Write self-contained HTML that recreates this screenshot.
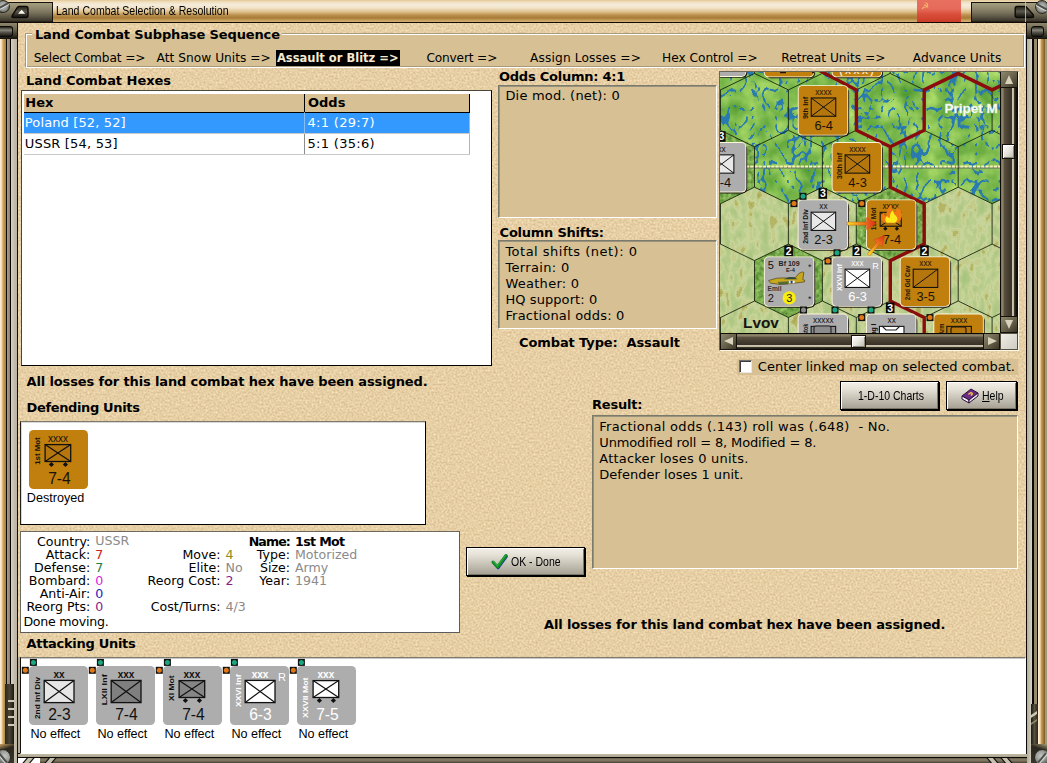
<!DOCTYPE html>
<html lang="en"><head><meta charset="utf-8"><title>Land Combat Selection &amp; Resolution</title>
<style>
html,body{margin:0;padding:0}
body{width:1047px;height:763px;position:relative;overflow:hidden;background:#e7cfa5;font-family:"DejaVu Sans","Liberation Sans",sans-serif;font-size:13px;color:#000}
.a{position:absolute;box-sizing:border-box}
.t{position:absolute;white-space:pre;display:block}
.f-dj{font-family:"DejaVu Sans","Liberation Sans",sans-serif}
.f-ls{font-family:"Liberation Sans","DejaVu Sans",sans-serif}
#tex{position:absolute;left:0;top:0;width:1047px;height:763px}
.flat{background:#d6c094}
.sunk{background:#d6c094;border:1px solid;border-color:#7b7b6b #fff #fff #7b7b6b;box-shadow:inset 1px 1px 0 #9a927c}
.white{background:#fff}
.btn{position:absolute;box-sizing:border-box;border:1px solid #000;background:linear-gradient(#f2efe8 0%,#e6e2d8 25%,#cbc7bb 55%,#a59f92 100%);box-shadow:1px 1px 0 #000, inset 1px 1px 0 #fff, inset -1px -1px 0 #7a7568}
.nar{position:absolute;white-space:pre;font-family:"Liberation Sans","DejaVu Sans",sans-serif;transform-origin:0 0;display:block}
</style></head>
<body>
<svg id="tex" width="1047" height="763">
 <filter id="sand" x="0" y="0" width="100%" height="100%" color-interpolation-filters="sRGB">
  <feTurbulence type="fractalNoise" baseFrequency="0.5" numOctaves="2" seed="7"/>
  <feColorMatrix type="matrix" values="0.22 0 0 0 0.796  0.24 0 0 0 0.692  0.28 0 0 0 0.507  0 0 0 0 1"/>
 </filter>
 <rect width="1047" height="763" filter="url(#sand)"/>
</svg>

<!-- ===== title bar ===== -->
<div class="a" id="titlebar" style="left:0;top:0;width:1047px;height:23px;background:linear-gradient(#e2c896 0px,#f0dfc0 2px,#f6ecdc 5px,#f1e2c6 8px,#dcbf8a 12px,#bb9150 15px,#a87a34 18px,#c49c5a 20px,#cfac70 21.6px,#120a04 21.6px,#120a04 22.8px,#e4d0a6 22.8px)"></div>
<div class="a" style="left:0;top:2px;width:53px;height:20px;background:linear-gradient(#16120c 0,#16120c 1px,#a59d80 1px,#968e72 5px,#7d7660 10px,#5a5444 15px,#3a352a 19px,#16120c 20px);border-right:1px solid #16120c"></div>
<div class="a" style="left:-4px;top:0;width:14px;height:13px;border-radius:50%;background:radial-gradient(circle at 6px 5px,#c4c6c2 0,#9a9c98 4px,#55564f 7px);border:1px solid #2c2a22"></div>
<div class="a" style="left:-3px;top:5px;width:12px;height:2px;background:#4c4e4a;transform:rotate(-28deg);box-shadow:0 1px 0 #dcdedc"></div>
<svg class="a" style="left:0;top:0" width="60" height="23" viewBox="0 0 60 23"><defs><linearGradient id="tabg" x1="0" y1="0" x2="0" y2="1"><stop offset="0" stop-color="#221f17"/><stop offset="0.45" stop-color="#5a574c"/><stop offset="1" stop-color="#0e0c08"/></linearGradient></defs><path d="M19 6.4 H26 Q28 6.4 28 8.4 V15.6 Q28 17.6 26 17.6 H13.4 Q11 17.6 12.4 15.4 L17.2 7.6 Q18 6.4 19 6.4 Z" fill="url(#tabg)" stroke="#0c0a06" stroke-width="1.4"/><path d="M18 13.8 L21.6 9.8 L25.2 13.8 Z" fill="#fbf8f0"/></svg>
<span class="nar" style="left:56.4px;top:2.6px;font-size:13px;line-height:16px;transform:scaleX(0.812)">Land Combat Selection &amp; Resolution</span>
<div class="a" style="left:917px;top:0;width:44px;height:22px;background:linear-gradient(#e8705f 0,#e66a5c 9px,#d9503c 14px,#cc3c28 22px)"></div>
<span class="t f-ls" style="left:921px;top:1px;font-size:9px;line-height:11px;color:#f3c46a">☭</span>
<div class="a" style="left:971px;top:2px;width:76px;height:20px;background:linear-gradient(#16120c 0,#16120c 1px,#a59d80 1px,#968e72 5px,#7d7660 10px,#5a5444 15px,#3a352a 19px,#16120c 20px);border-left:1px solid #16120c"></div>
<svg class="a" style="left:1010px;top:0" width="30" height="23" viewBox="1010 0 30 23"><path d="M1017.2 6.4 H1024.6 Q1026 6.4 1027 7.6 L1033 14.4 Q1034.6 17.6 1031.6 17.6 H1017.2 Q1015.2 17.6 1015.2 15.6 V8.4 Q1015.2 6.4 1017.2 6.4 Z" fill="url(#tabg)" stroke="#0c0a06" stroke-width="1.4"/></svg>
<div class="a" style="left:1035px;top:0;width:14px;height:14px;border-radius:50%;background:radial-gradient(circle at 6px 6px,#c4c6c2 0,#9a9c98 4px,#55564f 7px);border:1px solid #2c2a22"></div>
<div class="a" style="left:1036px;top:6px;width:12px;height:2px;background:#4c4e4a;transform:rotate(28deg);box-shadow:0 1px 0 #dcdedc"></div>
<div class="a" style="left:1025px;top:0;width:1px;height:22px;background:#e8c890;opacity:.8"></div>

<!-- ===== side frames ===== -->
<div class="a" id="frameL" style="left:0;top:23px;width:18px;height:740px;background:linear-gradient(90deg,#fff6e4 0,#f3dcb0 1.5px,#d4a964 3px,#b08a48 5px,#9c8458 6px,#0d0806 6px,#0d0806 7px,#a89c84 7px,#8c826c 10px,#0a0605 10px,#0a0605 11.3px,#d6cfc0 11.3px,#c4bcac 14px,#bab2a2 16.8px,#140c10 16.8px,#140c10 18px)"></div>
<div class="a" style="left:0;top:23px;width:17px;height:16px;background:linear-gradient(#8f876c 0,#6e6752 6px,#3a352a 12px,#15120d 16px)"></div>
<div class="a" style="left:0;top:26px;width:12.5px;height:11px;border-radius:0 3px 3px 0;background:linear-gradient(#25221a 0,#8a887c 35%,#55524a 60%,#1a1812 100%);border:1px solid #0c0a07;border-left:0"></div>
<div class="a" id="frameR" style="left:1026px;top:23px;width:21px;height:740px;background:linear-gradient(90deg,#0c0807 0,#0c0807 1.2px,#b4b09c 1.2px,#c8c4b4 4px,#dad6ca 6.5px,#0c0807 6.5px,#0c0807 8px,#8e8664 8px,#989070 10.6px,#0c0807 10.6px,#0c0807 11.8px,#fff4e0 11.8px,#f6dcae 14px,#c8984e 15.5px,#866430 18.5px,#a49c74 18.8px,#a09870 21px)"></div>
<div class="a" style="left:1027px;top:23px;width:20px;height:16px;background:linear-gradient(#8f876c 0,#6e6752 6px,#3a352a 12px,#15120d 16px)"></div>
<div class="a" style="left:1031px;top:26px;width:13px;height:11px;border-radius:3px;background:linear-gradient(#25221a 0,#8a887c 35%,#55524a 60%,#1a1812 100%);border:1px solid #0c0a07"></div>
<div class="a" style="left:5px;top:684px;width:9px;height:60px;background:linear-gradient(90deg,#2a241a,#4a4436 50%,#1c1812)"></div>
<div class="a" style="left:8px;top:700px;width:6px;height:2px;background:#cfc8b6;box-shadow:0 8px 0 #cfc8b6,0 16px 0 #cfc8b6,0 24px 0 #cfc8b6"></div>
<div class="a" style="left:1031px;top:704px;width:7px;height:42px;background:linear-gradient(90deg,#1c1812,#57503e 50%,#2a241a)"></div>
<div class="a" style="left:1031px;top:713px;width:6px;height:3px;background:#cfc8b6;transform:skewY(-35deg)"></div>
<div class="a" style="left:1031px;top:721px;width:6px;height:2px;background:#8f8868;transform:skewY(-35deg)"></div>
<!-- bottom frame -->
<div class="a" id="frameB" style="left:18px;top:753px;width:1009px;height:10px;background:linear-gradient(#0d0806 0,#0d0806 1px,#c2bba6 1px,#aaa48e 4px,#0d0806 4px,#0d0806 5.2px,#6c6250 5.2px,#8a806a 7px,#4a4234 10px)"></div>
<div class="a" style="left:18px;top:758px;width:22px;height:5px;background:#fff"></div>
<div class="a" style="left:26px;top:758px;width:5px;height:5px;background:#c6c0ae;transform:skewX(-40deg);box-shadow:-1.5px 0 0 #111,1.5px 0 0 #111"></div>
<div class="a" style="left:48px;top:758px;width:5px;height:5px;background:#c6c0ae;transform:skewX(-40deg);box-shadow:-1.5px 0 0 #111,1.5px 0 0 #111"></div>
<div class="a" style="left:990px;top:758px;width:5px;height:5px;background:#c6c0ae;transform:skewX(40deg);box-shadow:-1.5px 0 0 #111,1.5px 0 0 #111"></div>
<div class="a" style="left:1004px;top:758px;width:5px;height:5px;background:#c6c0ae;transform:skewX(40deg);box-shadow:-1.5px 0 0 #111,1.5px 0 0 #111"></div>
<div class="a" style="left:0;top:744px;width:14px;height:19px;background:linear-gradient(160deg,#c9a060 0,#2b261d 30%,#3b362a 100%)"></div>
<div class="a" style="left:-6px;top:749px;width:17px;height:17px;border-radius:50%;background:radial-gradient(circle at 10px 6px,#c4c6c2 0,#9a9c98 5px,#55564f 9px);border:1px solid #2c2a22"></div>
<div class="a" style="left:-3px;top:757px;width:12px;height:2px;background:#4c4e4a;transform:rotate(50deg);box-shadow:0 1px 0 #dcdedc"></div>
<div class="a" style="left:1031px;top:744px;width:16px;height:19px;background:linear-gradient(200deg,#a49c74 0,#2b261d 30%,#3b362a 100%)"></div>
<div class="a" style="left:1034px;top:749px;width:17px;height:17px;border-radius:50%;background:radial-gradient(circle at 6px 6px,#c4c6c2 0,#9a9c98 5px,#55564f 9px);border:1px solid #2c2a22"></div>
<div class="a" style="left:1036px;top:757px;width:12px;height:2px;background:#4c4e4a;transform:rotate(-50deg);box-shadow:0 1px 0 #dcdedc"></div>

<!-- ===== group box: subphase sequence ===== -->
<div class="a flat" style="left:26px;top:34px;width:999px;height:34px;border:1px solid #fff;box-shadow:-1px -1px 0 #a89a78,inset -1px -1px 0 #a89a78"></div>
<div class="a" style="left:32px;top:33px;width:250px;height:1px;background:#e2cea4"></div><div class="a flat" style="left:32px;top:34px;width:250px;height:8px"></div>
<div class="a" style="left:276px;top:50px;width:124px;height:15.5px;background:#000"></div>

<!-- ===== land combat hexes list ===== -->
<div class="a white" id="hexlist" style="left:21px;top:90px;width:471px;height:276px;border:1px solid;border-color:#4a4838 #000 #000 #4a4630"></div>
<div class="a flat" style="left:24px;top:93.5px;width:446px;height:19px;border-bottom:1px solid #000;border-right:1px solid #000"></div>
<div class="a" style="left:304px;top:94px;width:1px;height:61px;background:#8c8c8c"></div>
<div class="a" style="left:304px;top:94px;width:1px;height:18px;background:#000"></div>
<div class="a" style="left:469px;top:113px;width:1px;height:42px;background:#b4b4b4"></div>
<div class="a" style="left:24px;top:113px;width:445px;height:20px;background:#3399ff"></div>
<div class="a" style="left:304px;top:113px;width:1px;height:20px;background:#86bdf5"></div>
<div class="a" style="left:24px;top:133px;width:446px;height:1px;background:#c8c8c8"></div>
<div class="a" style="left:24px;top:154px;width:446px;height:1px;background:#c8c8c8"></div>

<!-- ===== odds column / column shifts ===== -->
<div class="a sunk" style="left:498px;top:84.5px;width:218.5px;height:133px"></div>
<div class="a sunk" style="left:498px;top:240px;width:218.5px;height:89px"></div>

<!-- ===== map ===== -->
<svg class="a" id="map" style="left:720px;top:71px" width="280" height="262" viewBox="720 71 280 262">
<defs>
<filter id="fsw" x="0" y="0" width="100%" height="100%" color-interpolation-filters="sRGB">
 <feTurbulence type="fractalNoise" baseFrequency="0.05" numOctaves="3" seed="3" result="n"/>
 <feColorMatrix in="n" type="matrix" values="0.50 0 0 0 0.27  0.36 0 0 0 0.57  0.30 0 0 0 0.17  0 0 0 0 1" result="g"/>
 <feTurbulence type="turbulence" baseFrequency="0.085 0.055" numOctaves="2" seed="11" result="t"/>
 <feColorMatrix in="t" type="matrix" values="0 0 0 0 0.16  0 0 0 0 0.48  0 0 0 0 0.69  -18 0 0 0 2.5" result="b"/>
 <feComposite in="b" in2="g" operator="over"/>
</filter>
<filter id="fcl" x="0" y="0" width="100%" height="100%" color-interpolation-filters="sRGB">
 <feTurbulence type="fractalNoise" baseFrequency="0.13 0.07" numOctaves="2" seed="5" result="n"/>
 <feColorMatrix in="n" type="matrix" values="1 0 0 0 0  1 0 0 0 0  1 0 0 0 0  0 0 0 0 1" result="m"/>
 <feComponentTransfer in="m"><feFuncR type="discrete" tableValues="0.66 0.66 0.68 0.70 0.74 0.78 0.77 0.71 0.69 0.69"/><feFuncG type="discrete" tableValues="0.77 0.77 0.78 0.79 0.81 0.83 0.80 0.71 0.67 0.67"/><feFuncB type="discrete" tableValues="0.50 0.50 0.51 0.53 0.56 0.60 0.55 0.40 0.35 0.35"/></feComponentTransfer>
</filter>
<filter id="ffo" x="0" y="0" width="100%" height="100%" color-interpolation-filters="sRGB">
 <feTurbulence type="fractalNoise" baseFrequency="0.25" numOctaves="2" seed="9" result="n"/>
 <feColorMatrix in="n" type="matrix" values="0.5 0 0 0 0.22  0.45 0 0 0 0.44  0.4 0 0 0 0.10  0 0 0 0 1"/>
</filter>
<linearGradient id="arr" x1="0" x2="1" y1="0" y2="0"><stop offset="0" stop-color="#f8e028"/><stop offset="0.45" stop-color="#f08a20"/><stop offset="1" stop-color="#e02818"/></linearGradient>

<clipPath id="cswamp"><polygon points="720.5,16.5 754.5,33.0 754.5,73.4 720.5,89.9 686.5,73.4 686.5,33.0"/><polygon points="788.4,16.5 822.4,33.0 822.4,73.4 788.4,89.9 754.4,73.4 754.4,33.0"/><polygon points="856.3,16.5 890.2,33.0 890.2,73.4 856.3,89.9 822.3,73.4 822.3,33.0"/><polygon points="924.2,16.5 958.2,33.0 958.2,73.4 924.2,89.9 890.2,73.4 890.2,33.0"/><polygon points="992.1,16.5 1026.0,33.0 1026.0,73.4 992.1,89.9 958.1,73.4 958.1,33.0"/><polygon points="686.6,73.4 720.5,89.9 720.5,130.3 686.6,146.8 652.6,130.3 652.6,89.9"/><polygon points="754.5,73.4 788.4,89.9 788.4,130.3 754.5,146.8 720.5,130.3 720.5,89.9"/><polygon points="822.4,73.4 856.3,89.9 856.3,130.3 822.4,146.8 788.4,130.3 788.4,89.9"/><polygon points="890.2,73.4 924.2,89.9 924.2,130.3 890.2,146.8 856.3,130.3 856.3,89.9"/><polygon points="958.2,73.4 992.1,89.9 992.1,130.3 958.2,146.8 924.2,130.3 924.2,89.9"/><polygon points="1026.1,73.4 1060.0,89.9 1060.0,130.3 1026.1,146.8 992.1,130.3 992.1,89.9"/><polygon points="788.4,130.3 822.4,146.8 822.4,187.2 788.4,203.7 754.4,187.2 754.4,146.8"/><polygon points="856.3,130.3 890.2,146.8 890.2,187.2 856.3,203.7 822.3,187.2 822.3,146.8"/><polygon points="924.2,130.3 958.2,146.8 958.2,187.2 924.2,203.7 890.2,187.2 890.2,146.8"/><polygon points="992.1,130.3 1026.0,146.8 1026.0,187.2 992.1,203.7 958.1,187.2 958.1,146.8"/></clipPath>
<clipPath id="cclear"><polygon points="686.6,187.2 720.5,203.7 720.5,244.1 686.6,260.6 652.6,244.1 652.6,203.7"/><polygon points="754.5,187.2 788.4,203.7 788.4,244.1 754.5,260.6 720.5,244.1 720.5,203.7"/><polygon points="822.4,187.2 856.3,203.7 856.3,244.1 822.4,260.6 788.4,244.1 788.4,203.7"/><polygon points="958.2,187.2 992.1,203.7 992.1,244.1 958.2,260.6 924.2,244.1 924.2,203.7"/><polygon points="1026.1,187.2 1060.0,203.7 1060.0,244.1 1026.1,260.6 992.1,244.1 992.1,203.7"/><polygon points="720.5,244.1 754.5,260.6 754.5,301.0 720.5,317.5 686.5,301.0 686.5,260.6"/><polygon points="856.3,244.1 890.2,260.6 890.2,301.0 856.3,317.5 822.3,301.0 822.3,260.6"/><polygon points="924.2,244.1 958.2,260.6 958.2,301.0 924.2,317.5 890.2,301.0 890.2,260.6"/><polygon points="992.1,244.1 1026.0,260.6 1026.0,301.0 992.1,317.5 958.1,301.0 958.1,260.6"/><polygon points="686.6,301.0 720.5,317.5 720.5,357.9 686.6,374.4 652.6,357.9 652.6,317.5"/><polygon points="754.5,301.0 788.4,317.5 788.4,357.9 754.5,374.4 720.5,357.9 720.5,317.5"/><polygon points="822.4,301.0 856.3,317.5 856.3,357.9 822.4,374.4 788.4,357.9 788.4,317.5"/><polygon points="890.2,301.0 924.2,317.5 924.2,357.9 890.2,374.4 856.3,357.9 856.3,317.5"/><polygon points="958.2,301.0 992.1,317.5 992.1,357.9 958.2,374.4 924.2,357.9 924.2,317.5"/><polygon points="1026.1,301.0 1060.0,317.5 1060.0,357.9 1026.1,374.4 992.1,357.9 992.1,317.5"/></clipPath>
<clipPath id="cforest"><polygon points="720.5,130.3 754.5,146.8 754.5,187.2 720.5,203.7 686.5,187.2 686.5,146.8"/><polygon points="890.2,187.2 924.2,203.7 924.2,244.1 890.2,260.6 856.3,244.1 856.3,203.7"/><polygon points="788.4,244.1 822.4,260.6 822.4,301.0 788.4,317.5 754.4,301.0 754.4,260.6"/></clipPath>
</defs>
<rect x="720" y="71" width="280" height="262" fill="#b7c88a"/>
<g clip-path="url(#cclear)"><rect x="720" y="71" width="280" height="262" filter="url(#fcl)"/></g>
<g clip-path="url(#cswamp)"><rect x="720" y="71" width="280" height="262" filter="url(#fsw)"/></g>
<g clip-path="url(#cforest)"><rect x="720" y="71" width="280" height="262" filter="url(#ffo)"/></g>
<path d="M746 167.9 H1000" stroke="#6f7c66" stroke-width="1.8" opacity="0.85"/>
<path d="M746 166.6 H1000" stroke="#f6f0b4" stroke-width="2" stroke-dasharray="3.2 1"/>
<path d="M618.6 33.0L652.6 16.5L686.6 33.0L686.6 73.4M686.5 33.0L720.5 16.5L754.5 33.0L754.5 73.4M754.4 33.0L788.4 16.5L822.4 33.0L822.4 73.4M822.3 33.0L856.3 16.5L890.2 33.0L890.2 73.4M890.2 33.0L924.2 16.5L958.2 33.0L958.2 73.4M958.1 33.0L992.1 16.5L1026.0 33.0L1026.0 73.4M1026.0 33.0L1060.0 16.5L1094.0 33.0L1094.0 73.4M652.6 89.9L686.6 73.4L720.5 89.9L720.5 130.3M720.5 89.9L754.5 73.4L788.4 89.9L788.4 130.3M788.4 89.9L822.4 73.4L856.3 89.9L856.3 130.3M856.3 89.9L890.2 73.4L924.2 89.9L924.2 130.3M924.2 89.9L958.2 73.4L992.1 89.9L992.1 130.3M992.1 89.9L1026.1 73.4L1060.0 89.9L1060.0 130.3M1060.0 89.9L1094.0 73.4L1127.9 89.9L1127.9 130.3M618.6 146.8L652.6 130.3L686.6 146.8L686.6 187.2M686.5 146.8L720.5 130.3L754.5 146.8L754.5 187.2M754.4 146.8L788.4 130.3L822.4 146.8L822.4 187.2M822.3 146.8L856.3 130.3L890.2 146.8L890.2 187.2M890.2 146.8L924.2 130.3L958.2 146.8L958.2 187.2M958.1 146.8L992.1 130.3L1026.0 146.8L1026.0 187.2M1026.0 146.8L1060.0 130.3L1094.0 146.8L1094.0 187.2M652.6 203.7L686.6 187.2L720.5 203.7L720.5 244.1M720.5 203.7L754.5 187.2L788.4 203.7L788.4 244.1M788.4 203.7L822.4 187.2L856.3 203.7L856.3 244.1M856.3 203.7L890.2 187.2L924.2 203.7L924.2 244.1M924.2 203.7L958.2 187.2L992.1 203.7L992.1 244.1M992.1 203.7L1026.1 187.2L1060.0 203.7L1060.0 244.1M1060.0 203.7L1094.0 187.2L1127.9 203.7L1127.9 244.1M618.6 260.6L652.6 244.1L686.6 260.6L686.6 301.0M686.5 260.6L720.5 244.1L754.5 260.6L754.5 301.0M754.4 260.6L788.4 244.1L822.4 260.6L822.4 301.0M822.3 260.6L856.3 244.1L890.2 260.6L890.2 301.0M890.2 260.6L924.2 244.1L958.2 260.6L958.2 301.0M958.1 260.6L992.1 244.1L1026.0 260.6L1026.0 301.0M1026.0 260.6L1060.0 244.1L1094.0 260.6L1094.0 301.0M652.6 317.5L686.6 301.0L720.5 317.5L720.5 357.9M720.5 317.5L754.5 301.0L788.4 317.5L788.4 357.9M788.4 317.5L822.4 301.0L856.3 317.5L856.3 357.9M856.3 317.5L890.2 301.0L924.2 317.5L924.2 357.9M924.2 317.5L958.2 301.0L992.1 317.5L992.1 357.9M992.1 317.5L1026.1 301.0L1060.0 317.5L1060.0 357.9M1060.0 317.5L1094.0 301.0L1127.9 317.5L1127.9 357.9M618.6 374.4L652.6 357.9L686.6 374.4L686.6 414.8M686.5 374.4L720.5 357.9L754.5 374.4L754.5 414.8M754.4 374.4L788.4 357.9L822.4 374.4L822.4 414.8M822.3 374.4L856.3 357.9L890.2 374.4L890.2 414.8M890.2 374.4L924.2 357.9L958.2 374.4L958.2 414.8M958.1 374.4L992.1 357.9L1026.0 374.4L1026.0 414.8M1026.0 374.4L1060.0 357.9L1094.0 374.4L1094.0 414.8" fill="none" stroke="#14200c" stroke-width="1" opacity="0.85"/>
<path d="M818.5 70.0 L856.4 89.9 L856.4 130.3 L890.3 146.8 L890.3 187.2 L924.2 203.7 L924.2 244.1 L890.3 260.6 L890.3 301.0 L924.2 317.5 L924.2 362.9" fill="none" stroke="#8a0c0c" stroke-width="3.4" stroke-linejoin="round"/>
<path d="M890.3 146.8 L924.2 130.3 L924.2 89.9 L958.2 73.4 L992.1 89.9 L1004.0 84.1" fill="none" stroke="#8a0c0c" stroke-width="3.4" stroke-linejoin="round"/>
<text x="944.5" y="113.3" font-family="Liberation Sans, DejaVu Sans, sans-serif" font-size="13.5" font-weight="bold" fill="#fff" stroke="#d8ecd0" stroke-width="0.3">Pripet M</text>
<text x="743" y="327.8" font-family="Liberation Sans, DejaVu Sans, sans-serif" font-size="15.4" font-weight="bold" fill="#141414">Lvov</text>
<g transform="translate(696.8 27.4) scale(0.8237)"><rect x="1.6" y="1.6" width="59.6" height="59.6" rx="5.6" fill="#120e08" opacity="0.9"/>
<rect x="-1.1" y="-1.1" width="61.2" height="61.2" rx="5.6" fill="#fdf6dc"/>
<rect x="0" y="0" width="59" height="59" rx="4.6" fill="#adadad"/>
<text x="28.9" y="10.6" text-anchor="middle" font-family="Liberation Sans, DejaVu Sans, sans-serif" font-size="10" font-weight="normal" fill="#111"></text></g>
<g transform="translate(764.7 27.8) scale(0.8237)"><rect x="1.6" y="1.6" width="59.6" height="59.6" rx="5.6" fill="#120e08" opacity="0.9"/>
<rect x="-1.1" y="-1.1" width="61.2" height="61.2" rx="5.6" fill="#fdf6dc"/>
<rect x="0" y="0" width="59" height="59" rx="4.6" fill="#c17f0e"/>
<text x="28.9" y="10.6" text-anchor="middle" font-family="Liberation Sans, DejaVu Sans, sans-serif" font-size="10" font-weight="normal" fill="#111"></text></g>
<g transform="translate(832.6 27.8) scale(0.8237)"><rect x="1.6" y="1.6" width="59.6" height="59.6" rx="5.6" fill="#120e08" opacity="0.9"/>
<rect x="-1.1" y="-1.1" width="61.2" height="61.2" rx="5.6" fill="#fdf6dc"/>
<rect x="0" y="0" width="59" height="59" rx="4.6" fill="#c17f0e"/>
<text x="28.9" y="10.6" text-anchor="middle" font-family="Liberation Sans, DejaVu Sans, sans-serif" font-size="10" font-weight="normal" fill="#111"></text></g>
<path d="M780 72.5h6M812 72.5h2" stroke="#1c1408" stroke-width="1.4"/>
<text x="856.5" y="74.2" text-anchor="middle" font-family="Liberation Sans, DejaVu Sans, sans-serif" font-size="9" font-weight="bold" fill="#f4ead8">( X X X )</text>
<g transform="translate(798.7 86.1) scale(0.8237)"><rect x="1.6" y="1.6" width="59.6" height="59.6" rx="5.6" fill="#120e08" opacity="0.9"/>
<rect x="-1.1" y="-1.1" width="61.2" height="61.2" rx="5.6" fill="#fdf6dc"/>
<rect x="0" y="0" width="59" height="59" rx="4.6" fill="#c17f0e"/>
<rect x="15.2" y="14.4" width="29.8" height="22.2" fill="#b5770d" stroke="#111" stroke-width="1.3"/>
<path d="M15.2 14.4 L45.0 36.6 M45.0 14.4 L15.2 36.6" stroke="#111" stroke-width="1.2" fill="none"/>
<text x="30.1" y="10.6" text-anchor="middle" font-family="Liberation Sans, DejaVu Sans, sans-serif" font-size="10" font-weight="normal" fill="#1c1408">xxxx</text>
<text transform="translate(11.2 13) rotate(-90)" text-anchor="end" textLength="27" lengthAdjust="spacingAndGlyphs" font-family="Liberation Sans, DejaVu Sans, sans-serif" font-size="8" font-weight="bold" fill="#1c1408">9th Inf</text>
<text x="30.4" y="53.6" text-anchor="middle" font-family="Liberation Sans, DejaVu Sans, sans-serif" font-size="15.6" fill="#1c1408">6-4</text></g>
<g transform="translate(696.8 143.0) scale(0.8237)"><rect x="1.6" y="1.6" width="59.6" height="59.6" rx="5.6" fill="#120e08" opacity="0.9"/>
<rect x="-1.1" y="-1.1" width="61.2" height="61.2" rx="5.6" fill="#fdf6dc"/>
<rect x="0" y="0" width="59" height="59" rx="4.6" fill="#adadad"/>
<rect x="15.2" y="14.4" width="29.8" height="22.2" fill="#e8e8e8" stroke="#111" stroke-width="1.3"/>
<path d="M15.2 14.4 L45.0 36.6 M45.0 14.4 L15.2 36.6" stroke="#111" stroke-width="1.2" fill="none"/>
<text x="30.1" y="10.6" text-anchor="middle" font-family="Liberation Sans, DejaVu Sans, sans-serif" font-size="10" font-weight="normal" fill="#111">xx</text>
<text x="30.4" y="53.6" text-anchor="middle" font-family="Liberation Sans, DejaVu Sans, sans-serif" font-size="15.6" fill="#111">7-4</text></g>
<g transform="translate(832.6 143.0) scale(0.8237)"><rect x="1.6" y="1.6" width="59.6" height="59.6" rx="5.6" fill="#120e08" opacity="0.9"/>
<rect x="-1.1" y="-1.1" width="61.2" height="61.2" rx="5.6" fill="#fdf6dc"/>
<rect x="0" y="0" width="59" height="59" rx="4.6" fill="#c17f0e"/>
<rect x="15.2" y="14.4" width="29.8" height="22.2" fill="#b5770d" stroke="#111" stroke-width="1.3"/>
<path d="M15.2 14.4 L45.0 36.6 M45.0 14.4 L15.2 36.6" stroke="#111" stroke-width="1.2" fill="none"/>
<text x="30.1" y="10.6" text-anchor="middle" font-family="Liberation Sans, DejaVu Sans, sans-serif" font-size="10" font-weight="normal" fill="#1c1408">xxxx</text>
<text transform="translate(11.2 12) rotate(-90)" text-anchor="end" textLength="32" lengthAdjust="spacingAndGlyphs" font-family="Liberation Sans, DejaVu Sans, sans-serif" font-size="8" font-weight="bold" fill="#1c1408">30th Inf</text>
<text x="30.4" y="53.6" text-anchor="middle" font-family="Liberation Sans, DejaVu Sans, sans-serif" font-size="15.6" fill="#1c1408">4-3</text></g>
<g transform="translate(798.6 200.3) scale(0.8237)"><rect x="1.6" y="1.6" width="59.6" height="59.6" rx="5.6" fill="#120e08" opacity="0.9"/>
<rect x="-1.1" y="-1.1" width="61.2" height="61.2" rx="5.6" fill="#fdf6dc"/>
<rect x="0" y="0" width="59" height="59" rx="4.6" fill="#adadad"/>
<rect x="15.2" y="14.4" width="29.8" height="22.2" fill="#e8e8e8" stroke="#111" stroke-width="1.3"/>
<path d="M15.2 14.4 L45.0 36.6 M45.0 14.4 L15.2 36.6" stroke="#111" stroke-width="1.2" fill="none"/>
<text x="30.1" y="10.6" text-anchor="middle" font-family="Liberation Sans, DejaVu Sans, sans-serif" font-size="10" font-weight="normal" fill="#111">xx</text>
<text transform="translate(11.2 10.8) rotate(-90)" text-anchor="end" textLength="42" lengthAdjust="spacingAndGlyphs" font-family="Liberation Sans, DejaVu Sans, sans-serif" font-size="8" font-weight="bold" fill="#111">2nd Inf Div</text>
<text x="30.4" y="53.6" text-anchor="middle" font-family="Liberation Sans, DejaVu Sans, sans-serif" font-size="15.6" fill="#111">2-3</text></g>
<g transform="translate(866.9 200.3) scale(0.8237)"><rect x="1.6" y="1.6" width="59.6" height="59.6" rx="5.6" fill="#120e08" opacity="0.9"/>
<rect x="-1.1" y="-1.1" width="61.2" height="61.2" rx="5.6" fill="#fdf6dc"/>
<rect x="0" y="0" width="59" height="59" rx="4.6" fill="#c17f0e"/>
<rect x="16.1" y="14.6" width="25.6" height="16.9" fill="#b5770d" stroke="#111" stroke-width="1.3"/>
<path d="M16.1 14.6 L41.7 31.5 M41.7 14.6 L16.1 31.5" stroke="#111" stroke-width="1.2" fill="none"/>
<path d="M19.799999999999997 34.4 L22.4 31.9 L25.0 34.4 L22.4 36.9 Z" fill="#111"/>
<path d="M33.8 34.4 L36.4 31.9 L39.0 34.4 L36.4 36.9 Z" fill="#111"/>
<text x="28.9" y="10.6" text-anchor="middle" font-family="Liberation Sans, DejaVu Sans, sans-serif" font-size="10" font-weight="normal" fill="#1c1408">xxxx</text>
<text transform="translate(11.2 9) rotate(-90)" text-anchor="end" textLength="27.5" lengthAdjust="spacingAndGlyphs" font-family="Liberation Sans, DejaVu Sans, sans-serif" font-size="8" font-weight="bold" fill="#1c1408">1st Mot</text>
<text x="30.4" y="53.6" text-anchor="middle" font-family="Liberation Sans, DejaVu Sans, sans-serif" font-size="15.6" fill="#1c1408">7-4</text></g>
<g transform="translate(764.8 257.3) scale(0.8237)"><rect x="1.6" y="1.6" width="59.6" height="59.6" rx="5.6" fill="#120e08" opacity="0.9"/>
<rect x="-1.1" y="-1.1" width="61.2" height="61.2" rx="5.6" fill="#fdf6dc"/>
<rect x="0" y="0" width="59" height="59" rx="4.6" fill="#adadad"/>
<text x="28.9" y="10.6" text-anchor="middle" font-family="Liberation Sans, DejaVu Sans, sans-serif" font-size="10" font-weight="normal" fill="#111"></text></g>
<g transform="translate(832.6 257.3) scale(0.8237)"><rect x="1.6" y="1.6" width="59.6" height="59.6" rx="5.6" fill="#120e08" opacity="0.9"/>
<rect x="-1.1" y="-1.1" width="61.2" height="61.2" rx="5.6" fill="#fdf6dc"/>
<rect x="0" y="0" width="59" height="59" rx="4.6" fill="#adadad"/>
<rect x="15.2" y="14.4" width="29.8" height="22.2" fill="#fff" stroke="#111" stroke-width="1.3"/>
<path d="M15.2 14.4 L45.0 36.6 M45.0 14.4 L15.2 36.6" stroke="#111" stroke-width="1.2" fill="none"/>
<text x="30.1" y="10.6" text-anchor="middle" font-family="Liberation Sans, DejaVu Sans, sans-serif" font-size="10" font-weight="normal" fill="#fff">xxx</text>
<text x="48" y="14.5" font-family="Liberation Sans, DejaVu Sans, sans-serif" font-size="11" fill="#fff">R</text>
<text transform="translate(11.2 8.4) rotate(-90)" text-anchor="end" textLength="32.6" lengthAdjust="spacingAndGlyphs" font-family="Liberation Sans, DejaVu Sans, sans-serif" font-size="8" font-weight="bold" fill="#fff">XXVI Inf</text>
<text x="30.4" y="53.6" text-anchor="middle" font-family="Liberation Sans, DejaVu Sans, sans-serif" font-size="15.6" fill="#fff">6-3</text></g>
<g transform="translate(900.7 257.3) scale(0.8237)"><rect x="1.6" y="1.6" width="59.6" height="59.6" rx="5.6" fill="#120e08" opacity="0.9"/>
<rect x="-1.1" y="-1.1" width="61.2" height="61.2" rx="5.6" fill="#fdf6dc"/>
<rect x="0" y="0" width="59" height="59" rx="4.6" fill="#c17f0e"/>
<rect x="15.2" y="14.4" width="29.8" height="22.2" fill="#b5770d" stroke="#111" stroke-width="1.3"/>
<path d="M45.0 14.4 L15.2 36.6" stroke="#111" stroke-width="1.2" fill="none"/>
<text x="30.1" y="10.6" text-anchor="middle" font-family="Liberation Sans, DejaVu Sans, sans-serif" font-size="10" font-weight="normal" fill="#1c1408">xxx</text>
<text transform="translate(11.2 10) rotate(-90)" text-anchor="end" textLength="42" lengthAdjust="spacingAndGlyphs" font-family="Liberation Sans, DejaVu Sans, sans-serif" font-size="8" font-weight="bold" fill="#1c1408">2nd Gd Cav</text>
<text x="30.4" y="53.6" text-anchor="middle" font-family="Liberation Sans, DejaVu Sans, sans-serif" font-size="15.6" fill="#1c1408">3-5</text></g>
<g transform="translate(798.6 314.5) scale(0.8237)"><rect x="1.6" y="1.6" width="59.6" height="59.6" rx="5.6" fill="#120e08" opacity="0.9"/>
<rect x="-1.1" y="-1.1" width="61.2" height="61.2" rx="5.6" fill="#fdf6dc"/>
<rect x="0" y="0" width="59" height="59" rx="4.6" fill="#adadad"/>
<rect x="15.2" y="14.4" width="29.8" height="22.2" fill="#8c8c8c" stroke="#111" stroke-width="1.3"/>
<text x="30.1" y="10.6" text-anchor="middle" font-family="Liberation Sans, DejaVu Sans, sans-serif" font-size="10" font-weight="normal" fill="#111">xxxxx</text>
<text transform="translate(11.2 11) rotate(-90)" text-anchor="end" textLength="30" lengthAdjust="spacingAndGlyphs" font-family="Liberation Sans, DejaVu Sans, sans-serif" font-size="8" font-weight="bold" fill="#111">Bialystok</text></g>
<g transform="translate(866.9 314.5) scale(0.8237)"><rect x="1.6" y="1.6" width="59.6" height="59.6" rx="5.6" fill="#120e08" opacity="0.9"/>
<rect x="-1.1" y="-1.1" width="61.2" height="61.2" rx="5.6" fill="#fdf6dc"/>
<rect x="0" y="0" width="59" height="59" rx="4.6" fill="#adadad"/>
<rect x="15.2" y="14.4" width="29.8" height="22.2" fill="#fff" stroke="#111" stroke-width="1.3"/>
<text x="30.1" y="10.6" text-anchor="middle" font-family="Liberation Sans, DejaVu Sans, sans-serif" font-size="10" font-weight="normal" fill="#111">xx</text>
<text transform="translate(11.2 11) rotate(-90)" text-anchor="end" textLength="20" lengthAdjust="spacingAndGlyphs" font-family="Liberation Sans, DejaVu Sans, sans-serif" font-size="8" font-weight="bold" fill="#111">Eng I</text></g>
<g transform="translate(934.3 314.5) scale(0.8237)"><rect x="1.6" y="1.6" width="59.6" height="59.6" rx="5.6" fill="#120e08" opacity="0.9"/>
<rect x="-1.1" y="-1.1" width="61.2" height="61.2" rx="5.6" fill="#fdf6dc"/>
<rect x="0" y="0" width="59" height="59" rx="4.6" fill="#c17f0e"/>
<rect x="15.2" y="14.4" width="29.8" height="22.2" fill="#b5770d" stroke="#111" stroke-width="1.3"/>
<text x="30.1" y="10.6" text-anchor="middle" font-family="Liberation Sans, DejaVu Sans, sans-serif" font-size="10" font-weight="normal" fill="#1c1408">xxxx</text>
<text transform="translate(11.2 11) rotate(-90)" text-anchor="end" textLength="14" lengthAdjust="spacingAndGlyphs" font-family="Liberation Sans, DejaVu Sans, sans-serif" font-size="8" font-weight="bold" fill="#1c1408">Arm</text></g>
<path d="M814 333v-5q0-2 2-2h13q2 0 2 2v5" fill="#8c8c8c" stroke="#222" stroke-width="1.1"/>
<path d="M882 326 l4 4h10l4-4" fill="none" stroke="#222" stroke-width="1.1"/>
<path d="M951 333v-4q0-2 2-2h11q2 0 2 2v4" fill="none" stroke="#1c1408" stroke-width="1.1"/>
<text x="767.8000000000001" y="268.90000000000003" font-family="Liberation Sans, DejaVu Sans, sans-serif" font-size="11" fill="#111">5</text>
<text x="767.8000000000001" y="302.3" font-family="Liberation Sans, DejaVu Sans, sans-serif" font-size="11" fill="#111">2</text>
<text x="778.6" y="266.3" font-family="Liberation Sans, DejaVu Sans, sans-serif" font-size="7" font-weight="bold" fill="#222">Bf 109</text>
<text x="786.1" y="271.90000000000003" font-family="Liberation Sans, DejaVu Sans, sans-serif" font-size="5.6" font-weight="bold" fill="#222">E-4</text>
<text x="767.6" y="290.90000000000003" font-family="Liberation Sans, DejaVu Sans, sans-serif" font-size="6.6" font-weight="bold" fill="#333">Emil</text>
<text x="808.0" y="269.8" font-family="Liberation Sans, DejaVu Sans, sans-serif" font-size="9" fill="#223">*</text>
<text x="808.0" y="301.8" font-family="Liberation Sans, DejaVu Sans, sans-serif" font-size="9" fill="#223">*</text>
<circle cx="789.2" cy="297.90000000000003" r="6.6" fill="#f8ec10"/>
<text x="789.2" y="301.90000000000003" text-anchor="middle" font-family="Liberation Sans, DejaVu Sans, sans-serif" font-size="11" fill="#222">3</text>
<path d="M768.6 280.5 q8 -3.4 18 -2.6 l9 -0.4 q3 -5 6.6 -5.6 l1.6 0.4 l-1 7.4 l2 0.6 l-0.4 1.6 l-14 1.8 q-12 1.6 -20 -0.6 z" fill="#c8a81c" stroke="#3a3418" stroke-width="0.6"/>
<path d="M783.6 279.3 l6 -2.4 l5 0.6 l3 1.8 z" fill="#334a3a"/>
<path d="M788.6 280.7h6v2.6h-6z" fill="#f4f4f4"/><path d="M790.6 280.7h2v2.6h-2z" fill="#1a3a8a"/>
<path d="M777.6 281.90000000000003 l12 -0.6 l-2 3 l-8 0.4 z" fill="#3e5a3a" opacity="0.8"/>
<g transform="translate(890.6 213.6) scale(1.6 1.15) translate(-890.6 -213.6)">
<path d="M886.6 221.6 q-3.6 -4.6 -0.6 -9 q0.6 2.6 2.2 2.8 q-0.8 -5.4 2.6 -9.6 q0.2 4.4 2.6 6.4 q1.4 -2.2 1 -4.6 q4.2 4 3.2 9 q-0.4 2.6 -2.4 5 z" fill="#f07a14"/>
<path d="M888.2 221.6 q-2 -3.4 0.2 -6 q0.6 1.8 1.8 1.6 q-0.4 -3.6 1.8 -6.2 q0.4 3.2 2 4.6 q2 2.6 -0.6 6 z" fill="#fcea1c"/></g>
<path d="M847 222 H866.5 V217.6 L876.5 223.6 L866.5 229.6 V225.2 H847 Z" fill="url(#arr)" stroke="#b84a10" stroke-width="0.4"/>
<g transform="translate(868.6 255) rotate(-51)"><path d="M0 -1.6 H15 V-5.4 L25.5 0 L15 5.4 V1.6 H0 Z" fill="url(#arr)" stroke="#b84a10" stroke-width="0.4"/></g>
<rect x="717.0" y="131.2" width="8.6" height="10.6" fill="#0a0a0a"/><text x="721.3" y="140.2" text-anchor="middle" font-family="Liberation Sans, DejaVu Sans, sans-serif" font-size="10.5" font-weight="bold" fill="#fff">3</text>
<rect x="818.5" y="188.2" width="8.6" height="10.6" fill="#0a0a0a"/><text x="822.8" y="197.2" text-anchor="middle" font-family="Liberation Sans, DejaVu Sans, sans-serif" font-size="10.5" font-weight="bold" fill="#fff">3</text>
<rect x="784.3" y="245.5" width="8.6" height="10.6" fill="#0a0a0a"/><text x="788.6" y="254.5" text-anchor="middle" font-family="Liberation Sans, DejaVu Sans, sans-serif" font-size="10.5" font-weight="bold" fill="#fff">2</text>
<rect x="852.5" y="245.5" width="8.6" height="10.6" fill="#0a0a0a"/><text x="856.8" y="254.5" text-anchor="middle" font-family="Liberation Sans, DejaVu Sans, sans-serif" font-size="10.5" font-weight="bold" fill="#fff">2</text>
<rect x="920.2" y="245.5" width="8.6" height="10.6" fill="#0a0a0a"/><text x="924.5" y="254.5" text-anchor="middle" font-family="Liberation Sans, DejaVu Sans, sans-serif" font-size="10.5" font-weight="bold" fill="#fff">2</text>
<rect x="885.9" y="302.5" width="8.6" height="10.6" fill="#0a0a0a"/><text x="890.2" y="311.5" text-anchor="middle" font-family="Liberation Sans, DejaVu Sans, sans-serif" font-size="10.5" font-weight="bold" fill="#fff">3</text>
<rect x="799.5" y="192.8" width="7" height="7" fill="#111"/><circle cx="803" cy="196.3" r="2.5" fill="#1aa67e"/>
<rect x="790.5" y="200.1" width="7" height="7" fill="#111"/><circle cx="794" cy="203.6" r="2.5" fill="#e07818"/>
<rect x="858.3" y="200.1" width="7" height="7" fill="#111"/><circle cx="861.8" cy="203.6" r="2.5" fill="#e07818"/>
<rect x="833.5" y="249.3" width="7" height="7" fill="#111"/><circle cx="837" cy="252.8" r="2.5" fill="#1aa67e"/>
<rect x="824.5" y="257.5" width="7" height="7" fill="#111"/><circle cx="828" cy="261" r="2.5" fill="#e07818"/>
<rect x="800.0" y="306.5" width="7" height="7" fill="#111"/><circle cx="803.5" cy="310" r="2.5" fill="#8a8a8a"/>
<rect x="831.5" y="306.5" width="7" height="7" fill="#111"/><circle cx="835" cy="310" r="2.5" fill="#1aa67e"/>
<rect x="867.5" y="306.5" width="7" height="7" fill="#111"/><circle cx="871" cy="310" r="2.5" fill="#1aa67e"/>
<rect x="858.2" y="314.1" width="7" height="7" fill="#111"/><circle cx="861.7" cy="317.6" r="2.5" fill="#e07818"/>
<rect x="926.5" y="314.1" width="7" height="7" fill="#111"/><circle cx="930" cy="317.6" r="2.5" fill="#e07818"/>
</svg>
<div class="a" style="left:1000px;top:71px;width:18px;height:262px;background:linear-gradient(90deg,#0a0806 0,#0a0806 1px,#7d745c 1px,#8f866c 3px,#5a5140 4px,#463e30 8px,#3a3226 11.5px,#cfc8b2 12px,#bdb59e 14px,#3a3428 14.5px,#1a1610 16px,#0a0806 17px)"></div>
<div class="a" style="left:1000px;top:71px;width:18px;height:17px;background:linear-gradient(135deg,#8f8870 0,#6e6750 45%,#3a3426 100%);border:1px solid #14100a"></div>
<div class="a" style="left:1004.5px;top:75px;width:0;height:0;border-left:4.5px solid transparent;border-right:4.5px solid transparent;border-bottom:9px solid #d8d2bc"></div>
<div class="a" style="left:1000px;top:316px;width:18px;height:17px;background:linear-gradient(135deg,#8f8870 0,#6e6750 45%,#3a3426 100%);border:1px solid #14100a"></div>
<div class="a" style="left:1004.5px;top:320px;width:0;height:0;border-left:4.5px solid transparent;border-right:4.5px solid transparent;border-top:9px solid #d8d2bc"></div>
<div class="a" style="left:1002px;top:143.5px;width:13px;height:15px;background:linear-gradient(135deg,#ffffff 0,#e6e4dc 50%,#b9b6aa 100%);border:1px solid #14100a;box-shadow:inset 1px 1px 0 #fff,inset -1px -1px 0 #8a867a"></div>
<div class="a" style="left:720px;top:333px;width:280px;height:17px;background:linear-gradient(#0a0806 0,#0a0806 1px,#7d745c 1px,#8f866c 3px,#5a5140 4px,#463e30 8px,#3a3226 11.5px,#cfc8b2 12px,#bdb59e 14px,#3a3428 14.5px,#1a1610 16px,#0a0806 17px)"></div>
<div class="a" style="left:720px;top:333px;width:17px;height:17px;background:linear-gradient(135deg,#8f8870 0,#6e6750 45%,#3a3426 100%);border:1px solid #14100a"></div>
<div class="a" style="left:724px;top:337px;width:0;height:0;border-top:4.5px solid transparent;border-bottom:4.5px solid transparent;border-right:9px solid #d8d2bc"></div>
<div class="a" style="left:983px;top:333px;width:17px;height:17px;background:linear-gradient(135deg,#8f8870 0,#6e6750 45%,#3a3426 100%);border:1px solid #14100a"></div>
<div class="a" style="left:988px;top:337px;width:0;height:0;border-top:4.5px solid transparent;border-bottom:4.5px solid transparent;border-left:9px solid #d8d2bc"></div>
<div class="a" style="left:851px;top:335px;width:15px;height:13px;background:linear-gradient(135deg,#ffffff 0,#e6e4dc 50%,#b9b6aa 100%);border:1px solid #14100a;box-shadow:inset 1px 1px 0 #fff,inset -1px -1px 0 #8a867a"></div>
<div class="a" style="left:1000px;top:333px;width:18px;height:17px;background:linear-gradient(135deg,#efede6,#cfccc0);border:1px solid #55503f"></div>
<div class="a" style="left:719px;top:70.5px;width:300px;height:280.5px;border:1px solid;border-color:#6b6658 #fbf6e6 #fbf6e6 #6b6658;pointer-events:none"></div>

<!-- ===== checkbox + buttons ===== -->
<div class="a flat" style="left:737px;top:358.5px;width:281px;height:16px"></div>
<div class="a white" style="left:739px;top:360px;width:13px;height:13px;border:1px solid;border-color:#6e6e6e #e8e8e8 #e8e8e8 #6e6e6e;box-shadow:inset 1px 1px 0 #3c3c3c"></div>
<div class="btn" style="left:840px;top:381px;width:99px;height:29px"></div>
<span class="nar" style="left:858px;top:388.5px;font-size:12.5px;line-height:15px;transform:scaleX(0.84)">1-D-10 Charts</span>
<div class="btn" style="left:946px;top:381px;width:71px;height:29px"></div>
<svg class="a" style="left:960px;top:387px" width="20" height="18" viewBox="0 0 20 18"><path d="M2 9 L11 2 L18 6 L9 13 Z" fill="#6a2a86" stroke="#2a0f38" stroke-width="1"/><path d="M2 9 L9 13 L9 16 L2 12 Z" fill="#f4f0f8" stroke="#2a0f38" stroke-width="1"/><path d="M9 13 L18 6 L18 9 L9 16 Z" fill="#e4dcee" stroke="#2a0f38" stroke-width="1"/><path d="M8.5 7.5 q2 -2.8 3.6 -1.2 q0.8 1.2 -1.4 2" fill="none" stroke="#f2c838" stroke-width="1.4"/></svg>
<span class="nar" style="left:982px;top:388.5px;font-size:12.5px;line-height:15px;transform:scaleX(0.84)"><u>H</u>elp</span>

<!-- ===== result ===== -->
<div class="a sunk" style="left:592px;top:415px;width:426px;height:153.5px"></div>

<!-- ===== defending units ===== -->
<div class="a white" style="left:19.5px;top:420.5px;width:406px;height:104px;border:1px solid;border-color:#7d7c6c #000 #000 #26221c;box-shadow:inset 1px 1px 0 #d8d8d8"></div>

<!-- ===== info panel ===== -->
<div class="a white" style="left:20px;top:531px;width:440px;height:101.5px;border:1px solid;border-color:#6b6a5c #5c5c5c #5c5c5c #6b6a5c"></div>

<!-- ===== OK button ===== -->
<div class="btn" style="left:466px;top:547px;width:119px;height:29px"></div>
<svg class="a" style="left:491px;top:553px" width="18" height="17" viewBox="0 0 18 17"><path d="M2.6 10 L7.1 15 L15.6 3.5" fill="none" stroke="#1c3c9c" stroke-width="2.6" stroke-linecap="round" stroke-linejoin="round"/><path d="M2 9 L6.5 14 L15 2.5" fill="none" stroke="#0f8a22" stroke-width="3" stroke-linecap="round" stroke-linejoin="round"/><path d="M2.4 8.6 L6.5 13 L14.6 2.5" fill="none" stroke="#2ea83c" stroke-width="1.2" stroke-linecap="round" stroke-linejoin="round"/></svg>
<span class="nar" style="left:511px;top:555px;font-size:12.5px;line-height:15px;transform:scaleX(0.84)">OK - Done</span>

<!-- ===== attacking units ===== -->
<div class="a" style="left:18px;top:657px;width:3px;height:96px;background:#b4ac94"></div>
<div class="a white" style="left:20px;top:657px;width:1006px;height:96.5px;border:1px solid;border-color:#7d7c6c #fff #fff #111;box-shadow:inset 0 1px 0 #c8c8c8"></div>

<svg class="a" style="left:20px;top:421px" width="120" height="80" viewBox="20 421 120 80">
<g transform="translate(29 430)"><rect x="0" y="0" width="59" height="59" rx="4.6" fill="#c17f0e"/>
<rect x="16.1" y="14.6" width="25.6" height="16.9" fill="#b5770d" stroke="#111" stroke-width="1.3"/>
<path d="M16.1 14.6 L41.7 31.5 M41.7 14.6 L16.1 31.5" stroke="#111" stroke-width="1.2" fill="none"/>
<path d="M19.799999999999997 34.4 L22.4 31.9 L25.0 34.4 L22.4 36.9 Z" fill="#111"/>
<path d="M33.8 34.4 L36.4 31.9 L39.0 34.4 L36.4 36.9 Z" fill="#111"/>
<text x="28.9" y="11.6" text-anchor="middle" font-family="Liberation Sans, DejaVu Sans, sans-serif" font-size="10" font-weight="normal" fill="#1a1208">xxxx</text>
<text transform="translate(11.2 7.3) rotate(-90)" text-anchor="end" textLength="27.5" lengthAdjust="spacingAndGlyphs" font-family="Liberation Sans, DejaVu Sans, sans-serif" font-size="8" font-weight="bold" fill="#1a1208">1st Mot</text>
<text x="30.4" y="53.6" text-anchor="middle" font-family="Liberation Sans, DejaVu Sans, sans-serif" font-size="15.6" fill="#1a1208">7-4</text></g>
</svg>
<svg class="a" style="left:21px;top:658px" width="345" height="70" viewBox="21 658 345 70">
<g transform="translate(29 666)"><rect x="0" y="0" width="59" height="59" rx="4.6" fill="#adadad"/>
<rect x="15.2" y="14.4" width="29.8" height="22.2" fill="#e6e6e6" stroke="#111" stroke-width="1.3"/>
<path d="M15.2 14.4 L45.0 36.6 M45.0 14.4 L15.2 36.6" stroke="#111" stroke-width="1.2" fill="none"/>
<text x="30.1" y="11.6" text-anchor="middle" font-family="Liberation Sans, DejaVu Sans, sans-serif" font-size="10" font-weight="bold" fill="#111">xx</text>
<text transform="translate(11.2 10.8) rotate(-90)" text-anchor="end" textLength="42.2" lengthAdjust="spacingAndGlyphs" font-family="Liberation Sans, DejaVu Sans, sans-serif" font-size="8" font-weight="bold" fill="#111">2nd Inf Div</text>
<text x="30.4" y="53.6" text-anchor="middle" font-family="Liberation Sans, DejaVu Sans, sans-serif" font-size="15.6" fill="#111">2-3</text></g>
<rect x="21.8" y="666.8" width="7" height="7" fill="#111"/><circle cx="25.3" cy="670.3" r="2.5" fill="#e07818"/>
<rect x="29.9" y="658.9" width="7" height="7" fill="#111"/><circle cx="33.4" cy="662.4" r="2.5" fill="#1aa67e"/>
<g transform="translate(96 666)"><rect x="0" y="0" width="59" height="59" rx="4.6" fill="#adadad"/>
<rect x="15.2" y="14.4" width="29.8" height="22.2" fill="#7f7f7f" stroke="#111" stroke-width="1.3"/>
<path d="M15.2 14.4 L45.0 36.6 M45.0 14.4 L15.2 36.6" stroke="#111" stroke-width="1.2" fill="none"/>
<text x="30.1" y="11.6" text-anchor="middle" font-family="Liberation Sans, DejaVu Sans, sans-serif" font-size="10" font-weight="bold" fill="#111">xxx</text>
<text transform="translate(11.2 8.2) rotate(-90)" text-anchor="end" textLength="31" lengthAdjust="spacingAndGlyphs" font-family="Liberation Sans, DejaVu Sans, sans-serif" font-size="8" font-weight="bold" fill="#111">LXII Inf</text>
<text x="30.4" y="53.6" text-anchor="middle" font-family="Liberation Sans, DejaVu Sans, sans-serif" font-size="15.6" fill="#111">7-4</text></g>
<rect x="88.8" y="666.8" width="7" height="7" fill="#111"/><circle cx="92.3" cy="670.3" r="2.5" fill="#e07818"/>
<rect x="96.9" y="658.9" width="7" height="7" fill="#111"/><circle cx="100.4" cy="662.4" r="2.5" fill="#1aa67e"/>
<g transform="translate(163 666)"><rect x="0" y="0" width="59" height="59" rx="4.6" fill="#adadad"/>
<rect x="16.1" y="14.6" width="25.6" height="16.9" fill="#858585" stroke="#111" stroke-width="1.3"/>
<path d="M16.1 14.6 L41.7 31.5 M41.7 14.6 L16.1 31.5" stroke="#111" stroke-width="1.2" fill="none"/>
<path d="M19.799999999999997 34.4 L22.4 31.9 L25.0 34.4 L22.4 36.9 Z" fill="#111"/>
<path d="M33.8 34.4 L36.4 31.9 L39.0 34.4 L36.4 36.9 Z" fill="#111"/>
<text x="28.9" y="11.6" text-anchor="middle" font-family="Liberation Sans, DejaVu Sans, sans-serif" font-size="10" font-weight="bold" fill="#111">xxx</text>
<text transform="translate(11.2 9.4) rotate(-90)" text-anchor="end" textLength="25.6" lengthAdjust="spacingAndGlyphs" font-family="Liberation Sans, DejaVu Sans, sans-serif" font-size="8" font-weight="bold" fill="#111">XI Mot</text>
<text x="30.4" y="53.6" text-anchor="middle" font-family="Liberation Sans, DejaVu Sans, sans-serif" font-size="15.6" fill="#111">7-4</text></g>
<rect x="155.8" y="666.8" width="7" height="7" fill="#111"/><circle cx="159.3" cy="670.3" r="2.5" fill="#e07818"/>
<rect x="163.9" y="658.9" width="7" height="7" fill="#111"/><circle cx="167.4" cy="662.4" r="2.5" fill="#1aa67e"/>
<g transform="translate(230 666)"><rect x="0" y="0" width="59" height="59" rx="4.6" fill="#adadad"/>
<rect x="15.2" y="14.4" width="29.8" height="22.2" fill="#fff" stroke="#111" stroke-width="1.3"/>
<path d="M15.2 14.4 L45.0 36.6 M45.0 14.4 L15.2 36.6" stroke="#111" stroke-width="1.2" fill="none"/>
<text x="30.1" y="11.6" text-anchor="middle" font-family="Liberation Sans, DejaVu Sans, sans-serif" font-size="10" font-weight="bold" fill="#fff">xxx</text>
<text x="48" y="14.5" font-family="Liberation Sans, DejaVu Sans, sans-serif" font-size="11" fill="#fff">R</text>
<text transform="translate(11.2 8.4) rotate(-90)" text-anchor="end" textLength="32.6" lengthAdjust="spacingAndGlyphs" font-family="Liberation Sans, DejaVu Sans, sans-serif" font-size="8" font-weight="bold" fill="#fff">XXVI Inf</text>
<text x="30.4" y="53.6" text-anchor="middle" font-family="Liberation Sans, DejaVu Sans, sans-serif" font-size="15.6" fill="#fff">6-3</text></g>
<rect x="222.8" y="666.8" width="7" height="7" fill="#111"/><circle cx="226.3" cy="670.3" r="2.5" fill="#e07818"/>
<rect x="230.9" y="658.9" width="7" height="7" fill="#111"/><circle cx="234.4" cy="662.4" r="2.5" fill="#1aa67e"/>
<g transform="translate(297 666)"><rect x="0" y="0" width="59" height="59" rx="4.6" fill="#adadad"/>
<rect x="16.1" y="14.6" width="25.6" height="16.9" fill="#fff" stroke="#111" stroke-width="1.3"/>
<path d="M16.1 14.6 L41.7 31.5 M41.7 14.6 L16.1 31.5" stroke="#111" stroke-width="1.2" fill="none"/>
<path d="M19.799999999999997 34.4 L22.4 31.9 L25.0 34.4 L22.4 36.9 Z" fill="#111"/>
<path d="M33.8 34.4 L36.4 31.9 L39.0 34.4 L36.4 36.9 Z" fill="#111"/>
<text x="28.9" y="11.6" text-anchor="middle" font-family="Liberation Sans, DejaVu Sans, sans-serif" font-size="10" font-weight="bold" fill="#fff">xxx</text>
<text transform="translate(11.2 11.5) rotate(-90)" text-anchor="end" textLength="40.4" lengthAdjust="spacingAndGlyphs" font-family="Liberation Sans, DejaVu Sans, sans-serif" font-size="8" font-weight="bold" fill="#fff">XXVII Mot</text>
<text x="30.4" y="53.6" text-anchor="middle" font-family="Liberation Sans, DejaVu Sans, sans-serif" font-size="15.6" fill="#fff">7-5</text></g>
<rect x="289.8" y="666.8" width="7" height="7" fill="#111"/><circle cx="293.3" cy="670.3" r="2.5" fill="#e07818"/>
<rect x="297.9" y="658.9" width="7" height="7" fill="#111"/><circle cx="301.4" cy="662.4" r="2.5" fill="#1aa67e"/>
</svg>

<!-- ===== text labels ===== -->
<span class="t f-dj" style="left:34.9px;top:25.9px;font-size:13px;line-height:17px;font-weight:bold;letter-spacing:-0.126px;">Land Combat Subphase Sequence</span>
<span class="t f-dj" style="left:33.7px;top:49.5px;font-size:12.2px;line-height:16px;letter-spacing:-0.118px;">Select Combat =></span>
<span class="t f-dj" style="left:156.6px;top:49.5px;font-size:12.2px;line-height:16px;letter-spacing:0.025px;">Att Snow Units =></span>
<span class="t f-dj" style="left:276.9px;top:51.1px;font-size:11.5px;line-height:15px;font-weight:bold;color:#f4ead2;">Assault or Blitz =></span>
<span class="t f-dj" style="left:426.4px;top:49.5px;font-size:12.2px;line-height:16px;letter-spacing:-0.170px;">Convert =></span>
<span class="t f-dj" style="left:530.0px;top:49.5px;font-size:12.2px;line-height:16px;letter-spacing:0.147px;">Assign Losses =></span>
<span class="t f-dj" style="left:662.0px;top:49.5px;font-size:12.2px;line-height:16px;letter-spacing:-0.021px;">Hex Control =></span>
<span class="t f-dj" style="left:781.2px;top:49.5px;font-size:12.2px;line-height:16px;letter-spacing:0.018px;">Retreat Units =></span>
<span class="t f-dj" style="left:912.8px;top:49.5px;font-size:12.2px;line-height:16px;letter-spacing:0.085px;">Advance Units</span>
<span class="t f-dj" style="left:26.0px;top:71.7px;font-size:13px;line-height:17px;font-weight:bold;letter-spacing:-0.037px;">Land Combat Hexes</span>
<span class="t f-dj" style="left:25.3px;top:93.5px;font-size:13px;line-height:17px;font-weight:bold;">Hex</span>
<span class="t f-dj" style="left:308.0px;top:93.5px;font-size:13px;line-height:17px;font-weight:bold;">Odds</span>
<span class="t f-dj" style="left:24.8px;top:114.3px;font-size:13px;line-height:17px;color:#fff;letter-spacing:0.131px;">Poland [52, 52]</span>
<span class="t f-dj" style="left:307.5px;top:114.3px;font-size:13px;line-height:17px;color:#fff;letter-spacing:0.311px;">4:1 (29:7)</span>
<span class="t f-dj" style="left:24.8px;top:135.3px;font-size:13px;line-height:17px;letter-spacing:0.178px;">USSR [54, 53]</span>
<span class="t f-dj" style="left:307.5px;top:135.3px;font-size:13px;line-height:17px;letter-spacing:0.311px;">5:1 (35:6)</span>
<span class="t f-dj" style="left:499.0px;top:67.9px;font-size:13px;line-height:17px;font-weight:bold;letter-spacing:-0.246px;">Odds Column: 4:1</span>
<span class="t f-dj" style="left:505.4px;top:86.7px;font-size:13px;line-height:17px;letter-spacing:0.203px;">Die mod. (net): 0</span>
<span class="t f-dj" style="left:499.6px;top:223.6px;font-size:13px;line-height:17px;font-weight:bold;letter-spacing:-0.242px;">Column Shifts:</span>
<span class="t f-dj" style="left:505.4px;top:243.1px;font-size:13px;line-height:17px;letter-spacing:0.489px;">Total shifts (net): 0</span>
<span class="t f-dj" style="left:505.4px;top:259.1px;font-size:13px;line-height:17px;letter-spacing:0.330px;">Terrain: 0</span>
<span class="t f-dj" style="left:505.4px;top:275.1px;font-size:13px;line-height:17px;letter-spacing:0.270px;">Weather: 0</span>
<span class="t f-dj" style="left:505.4px;top:291.1px;font-size:13px;line-height:17px;letter-spacing:0.081px;">HQ support: 0</span>
<span class="t f-dj" style="left:505.4px;top:307.1px;font-size:13px;line-height:17px;letter-spacing:0.199px;">Fractional odds: 0</span>
<span class="t f-dj" style="left:519.1px;top:333.7px;font-size:13px;line-height:17px;font-weight:bold;letter-spacing:-0.117px;">Combat Type:  Assault</span>
<span class="t f-dj" style="left:26.5px;top:373.0px;font-size:13px;line-height:17px;font-weight:bold;letter-spacing:-0.134px;">All losses for this land combat hex have been assigned.</span>
<span class="t f-dj" style="left:26.5px;top:398.5px;font-size:13px;line-height:17px;font-weight:bold;letter-spacing:-0.360px;">Defending Units</span>
<span class="t f-dj" style="left:592.0px;top:396.3px;font-size:13px;line-height:17px;font-weight:bold;letter-spacing:-0.200px;">Result:</span>
<span class="t f-dj" style="left:599.3px;top:417.8px;font-size:13px;line-height:17px;letter-spacing:0.293px;">Fractional odds (.143) roll was (.648)  - No.</span>
<span class="t f-dj" style="left:599.3px;top:433.8px;font-size:13px;line-height:17px;letter-spacing:-0.141px;">Unmodified roll = 8, Modified = 8.</span>
<span class="t f-dj" style="left:599.3px;top:449.8px;font-size:13px;line-height:17px;letter-spacing:0.215px;">Attacker loses 0 units.</span>
<span class="t f-dj" style="left:599.3px;top:465.8px;font-size:13px;line-height:17px;letter-spacing:0.022px;">Defender loses 1 unit.</span>
<span class="t f-dj" style="left:757.8px;top:358.0px;font-size:13px;line-height:17px;letter-spacing:0.023px;">Center linked map on selected combat.</span>
<span class="t f-dj" style="left:544.0px;top:615.8px;font-size:13px;line-height:17px;font-weight:bold;letter-spacing:-0.127px;">All losses for this land combat hex have been assigned.</span>
<span class="t f-dj" style="left:26.5px;top:634.5px;font-size:13px;line-height:17px;font-weight:bold;letter-spacing:-0.293px;">Attacking Units</span>
<span class="t f-dj" style="left:36.9px;top:534.2px;font-size:12.6px;line-height:16px;">Country:</span>
<span class="t f-dj" style="left:95.2px;top:532.7px;font-size:12.6px;line-height:16px;color:#8a8a8a;">USSR</span>
<span class="t f-dj" style="left:45.8px;top:547.1px;font-size:12.6px;line-height:16px;">Attack:</span>
<span class="t f-dj" style="left:95.2px;top:547.1px;font-size:12.6px;line-height:16px;color:#cc2020;">7</span>
<span class="t f-dj" style="left:34.1px;top:560.0px;font-size:12.6px;line-height:16px;">Defense:</span>
<span class="t f-dj" style="left:95.2px;top:560.0px;font-size:12.6px;line-height:16px;color:#208040;">7</span>
<span class="t f-dj" style="left:28.8px;top:572.9px;font-size:12.6px;line-height:16px;">Bombard:</span>
<span class="t f-dj" style="left:95.2px;top:572.9px;font-size:12.6px;line-height:16px;color:#e020e0;">0</span>
<span class="t f-dj" style="left:39.7px;top:585.8px;font-size:12.6px;line-height:16px;">Anti-Air:</span>
<span class="t f-dj" style="left:95.2px;top:585.8px;font-size:12.6px;line-height:16px;color:#2020c0;">0</span>
<span class="t f-dj" style="left:26.4px;top:598.7px;font-size:12.6px;line-height:16px;">Reorg Pts:</span>
<span class="t f-dj" style="left:95.2px;top:598.7px;font-size:12.6px;line-height:16px;color:#882088;">0</span>
<span class="t f-dj" style="left:182.4px;top:547.1px;font-size:12.6px;line-height:16px;">Move:</span>
<span class="t f-dj" style="left:225.6px;top:547.1px;font-size:12.6px;line-height:16px;color:#8c8c20;">4</span>
<span class="t f-dj" style="left:188.5px;top:560.0px;font-size:12.6px;line-height:16px;">Elite:</span>
<span class="t f-dj" style="left:225.6px;top:560.0px;font-size:12.6px;line-height:16px;color:#8a8a8a;">No</span>
<span class="t f-dj" style="left:147.6px;top:572.9px;font-size:12.6px;line-height:16px;">Reorg Cost:</span>
<span class="t f-dj" style="left:225.6px;top:572.9px;font-size:12.6px;line-height:16px;color:#882088;">2</span>
<span class="t f-dj" style="left:150.7px;top:598.7px;font-size:12.6px;line-height:16px;">Cost/Turns:</span>
<span class="t f-dj" style="left:225.6px;top:598.7px;font-size:12.6px;line-height:16px;color:#8a8a8a;">4/3</span>
<span class="t f-dj" style="left:248.7px;top:534.2px;font-size:12.6px;line-height:16px;font-weight:bold;letter-spacing:-0.890px;">Name:</span>
<span class="t f-dj" style="left:295.0px;top:534.2px;font-size:12.6px;line-height:16px;font-weight:bold;letter-spacing:-0.625px;">1st Mot</span>
<span class="t f-dj" style="left:256.8px;top:547.1px;font-size:12.6px;line-height:16px;">Type:</span>
<span class="t f-dj" style="left:295.0px;top:547.1px;font-size:12.6px;line-height:16px;color:#8a8a8a;">Motorized</span>
<span class="t f-dj" style="left:259.9px;top:560.0px;font-size:12.6px;line-height:16px;">Size:</span>
<span class="t f-dj" style="left:295.0px;top:560.0px;font-size:12.6px;line-height:16px;color:#8a8a8a;">Army</span>
<span class="t f-dj" style="left:259.3px;top:572.9px;font-size:12.6px;line-height:16px;">Year:</span>
<span class="t f-dj" style="left:295.0px;top:572.9px;font-size:12.6px;line-height:16px;color:#8a8a8a;">1941</span>
<span class="t f-dj" style="left:23.4px;top:613.9px;font-size:12.6px;line-height:16px;letter-spacing:-0.254px;">Done moving.</span>
<span class="t f-ls" style="left:26.8px;top:489.7px;font-size:12.6px;line-height:16px;letter-spacing:0.022px;">Destroyed</span>
<span class="t f-ls" style="left:30.5px;top:725.5px;font-size:12.6px;line-height:16px;letter-spacing:-0.043px;">No effect</span>
<span class="t f-ls" style="left:97.5px;top:725.5px;font-size:12.6px;line-height:16px;letter-spacing:-0.043px;">No effect</span>
<span class="t f-ls" style="left:164.5px;top:725.5px;font-size:12.6px;line-height:16px;letter-spacing:-0.043px;">No effect</span>
<span class="t f-ls" style="left:231.5px;top:725.5px;font-size:12.6px;line-height:16px;letter-spacing:-0.043px;">No effect</span>
<span class="t f-ls" style="left:298.5px;top:725.5px;font-size:12.6px;line-height:16px;letter-spacing:-0.043px;">No effect</span>
</body></html>
